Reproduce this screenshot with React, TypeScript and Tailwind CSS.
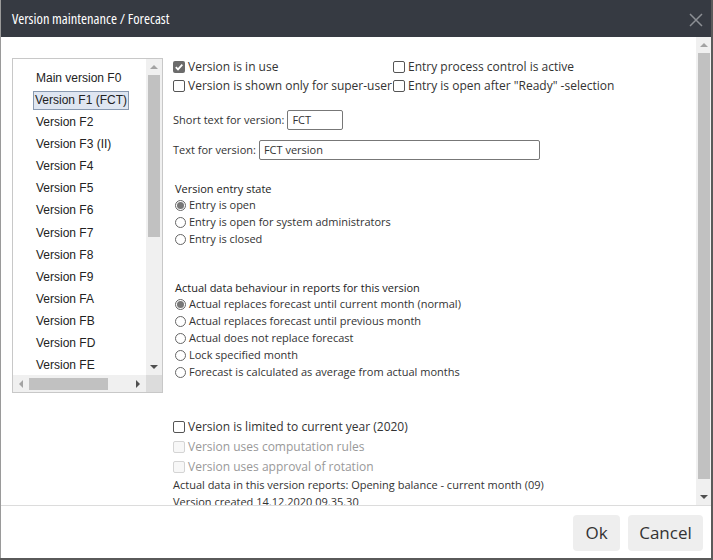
import React from "react";

const VERSIONS = [
  "Main version F0",
  "Version F1 (FCT)",
  "Version F2",
  "Version F3 (II)",
  "Version F4",
  "Version F5",
  "Version F6",
  "Version F7",
  "Version F8",
  "Version F9",
  "Version FA",
  "Version FB",
  "Version FD",
  "Version FE",
];

const ENTRY_STATES = [
  "Entry is open",
  "Entry is open for system administrators",
  "Entry is closed",
];

const ACTUAL_BEHAVIOUR = [
  "Actual replaces forecast until current month (normal)",
  "Actual replaces forecast until previous month",
  "Actual does not replace forecast",
  "Lock specified month",
  "Forecast is calculated as average from actual months",
];

function CheckBox({ checked, disabled }: { checked?: boolean; disabled?: boolean }) {
  if (checked) {
    return (
      <span className="w-[12px] h-[12px] rounded-[2px] bg-[#6b6b6b] flex items-center justify-center shrink-0">
        <svg width="10" height="10" viewBox="0 0 10 10">
          <path d="M1.8 5.2 L4 7.4 L8.3 2.6" stroke="white" strokeWidth="1.8" fill="none" />
        </svg>
      </span>
    );
  }
  return (
    <span
      className={`w-[12px] h-[12px] rounded-[2px] border shrink-0 ${
        disabled ? "border-[#d4d4d4] bg-[#f7f7f7]" : "border-[#555]"
      }`}
    />
  );
}

function Radio({ checked }: { checked?: boolean }) {
  return (
    <span className="w-[11px] h-[11px] rounded-full border border-[#666] flex items-center justify-center shrink-0 bg-white">
      {checked && <span className="w-[7px] h-[7px] rounded-full bg-[#777]" />}
    </span>
  );
}

export default function App() {
  return (
    <div className="w-[713px] h-[560px] bg-[#5a5a5a] overflow-hidden">
      <div className="w-[711px] h-[558px] bg-white flex flex-col border-l border-[#9a9a9a]">
        {/* Title bar */}
        <div className="h-[37px] bg-[#363a42] flex items-center justify-between pl-[11px] pr-[8px] shrink-0">
          <span
            className="text-white text-[14.5px] font-stretch-condensed"
            style={{ fontFamily: "'Open Sans', sans-serif" }}
          >
            Version maintenance / Forecast
          </span>
          <svg width="14" height="14" viewBox="0 0 14 14" className="mt-[2px]">
            <path d="M1 1 L13 13 M13 1 L1 13" stroke="#8c8f94" strokeWidth="1.5" />
          </svg>
        </div>

        {/* Body */}
        <div className="h-[469px] flex shrink-0 overflow-hidden border-b border-[#dcdcdc]">
          <div className="flex-1 flex pl-[11px] overflow-hidden">
            {/* Version list */}
            <div className="mt-[21px] w-[151px] h-[335px] border border-[#c8c8c8] flex flex-col shrink-0">
              <div className="flex flex-1 overflow-hidden">
                <div
                  className="flex-1 pl-[21px] pt-[8px] text-[12px] text-[#222]"
                  style={{ fontFamily: "'Liberation Sans', Arial, sans-serif" }}
                >
                  {VERSIONS.map((v, i) => (
                    <div key={v} className="h-[22.15px] flex items-center">
                      <span
                        className={`px-[1px] leading-[17px] ${
                          i === 1 ? "border border-[#8899b0] bg-[#dfe6f1] ml-[-1px]" : "border border-transparent"
                        }`}
                      >
                        {v}
                      </span>
                    </div>
                  ))}
                </div>
                <div className="w-[16px] bg-[#f0f0f0] flex flex-col items-center">
                  <div className="h-[16px] flex items-center justify-center">
                    <span className="w-0 h-0 border-l-[4px] border-r-[4px] border-b-[4px] border-l-transparent border-r-transparent border-b-[#a3a3a3]" />
                  </div>
                  <div className="w-[12px] h-[162px] bg-[#c1c1c1]" />
                  <div className="flex-1" />
                  <div className="h-[16px] flex items-center justify-center">
                    <span className="w-0 h-0 border-l-[4px] border-r-[4px] border-t-[4px] border-l-transparent border-r-transparent border-t-[#505050]" />
                  </div>
                </div>
              </div>
              <div className="h-[17px] flex bg-[#f0f0f0]">
                <div className="flex-1 flex items-center">
                  <div className="w-[16px] flex items-center justify-center">
                    <span className="w-0 h-0 border-t-[4px] border-b-[4px] border-r-[4px] border-t-transparent border-b-transparent border-r-[#a3a3a3]" />
                  </div>
                  <div className="w-[79px] h-[12px] bg-[#c1c1c1]" />
                  <div className="flex-1" />
                  <div className="w-[16px] flex items-center justify-center">
                    <span className="w-0 h-0 border-t-[4px] border-b-[4px] border-l-[4px] border-t-transparent border-b-transparent border-l-[#505050]" />
                  </div>
                </div>
                <div className="w-[16px] bg-[#dcdcdc]" />
              </div>
            </div>

            {/* Settings */}
            <div
              className="ml-[10px] pt-[20px] flex flex-col text-[#333]"
              style={{ fontFamily: "'Open Sans', sans-serif" }}
            >
              <div className="grid grid-cols-[220px_auto] text-[12px]">
                <label className="h-[19px] flex items-center gap-[3px]">
                  <CheckBox checked />
                  <span>Version is in use</span>
                </label>
                <label className="h-[19px] flex items-center gap-[3px]">
                  <CheckBox />
                  <span>Entry process control is active</span>
                </label>
                <label className="h-[19px] flex items-center gap-[3px] whitespace-nowrap">
                  <CheckBox />
                  <span>Version is shown only for super-user</span>
                </label>
                <label className="h-[19px] flex items-center gap-[3px]">
                  <CheckBox />
                  <span>Entry is open after "Ready" -selection</span>
                </label>
              </div>

              <div className="mt-[15px] flex items-center text-[11px] h-[20px]">
                <span>Short text for version:</span>
                <div className="ml-[3px] w-[56px] h-[20px] border border-[#777] rounded-[2px] flex items-center px-[4px]">
                  FCT
                </div>
              </div>
              <div className="mt-[10px] flex items-center text-[11px] h-[20px]">
                <span>Text for version:</span>
                <div className="ml-[3px] w-[281px] h-[20px] border border-[#777] rounded-[2px] flex items-center px-[4px]">
                  FCT version
                </div>
              </div>

              <div className="mt-[21px] text-[11px] font-medium text-[#222] h-[16px] flex items-center pl-[2px]">
                Version entry state
              </div>
              <div className="flex flex-col text-[11px]">
                {ENTRY_STATES.map((s, i) => (
                  <label key={s} className="h-[17px] flex items-center gap-[3px] pl-[2px]">
                    <Radio checked={i === 0} />
                    <span>{s}</span>
                  </label>
                ))}
              </div>

              <div className="mt-[32px] text-[11px] font-medium text-[#222] h-[16px] flex items-center pl-[2px]">
                Actual data behaviour in reports for this version
              </div>
              <div className="flex flex-col text-[11px]">
                {ACTUAL_BEHAVIOUR.map((s, i) => (
                  <label key={s} className="h-[17px] flex items-center gap-[3px] pl-[2px]">
                    <Radio checked={i === 0} />
                    <span>{s}</span>
                  </label>
                ))}
              </div>

              <div className="mt-[36px] flex flex-col text-[12px]">
                <label className="h-[20px] flex items-center gap-[3px]">
                  <CheckBox />
                  <span>Version is limited to current year (2020)</span>
                </label>
                <label className="h-[20px] flex items-center gap-[3px] text-[#999]">
                  <CheckBox disabled />
                  <span>Version uses computation rules</span>
                </label>
                <label className="h-[20px] flex items-center gap-[3px] text-[#999]">
                  <CheckBox disabled />
                  <span>Version uses approval of rotation</span>
                </label>
              </div>
              <div className="h-[20px] flex items-center text-[11px]">
                Actual data in this version reports: Opening balance - current month (09)
              </div>
              <div className="h-[17px] flex items-center text-[11px]">
                Version created 14.12.2020 09.35.30
              </div>
            </div>
          </div>

          {/* Outer vertical scrollbar */}
          <div className="w-[15px] bg-[#f0f0f0] flex flex-col items-center shrink-0">
            <div className="h-[16px] flex items-center justify-center">
              <span className="w-0 h-0 border-l-[4px] border-r-[4px] border-b-[4px] border-l-transparent border-r-transparent border-b-[#a3a3a3]" />
            </div>
            <div className="w-[12px] h-[426px] bg-[#c1c1c1]" />
            <div className="flex-1" />
            <div className="h-[16px] flex items-center justify-center">
              <span className="w-0 h-0 border-l-[4px] border-r-[4px] border-t-[4px] border-l-transparent border-r-transparent border-t-[#505050]" />
            </div>
          </div>
        </div>

        {/* Footer */}
        <div
          className="flex-1 flex items-start justify-end gap-[8px] pt-[9px] pr-[8px]"
          style={{ fontFamily: "'Open Sans', sans-serif" }}
        >
          <button className="w-[47px] h-[36px] rounded-[4px] bg-[#eeeeee] text-[17px] text-[#333]">Ok</button>
          <button className="w-[75px] h-[36px] rounded-[4px] bg-[#eeeeee] text-[17px] text-[#333]">Cancel</button>
        </div>
      </div>
    </div>
  );
}
